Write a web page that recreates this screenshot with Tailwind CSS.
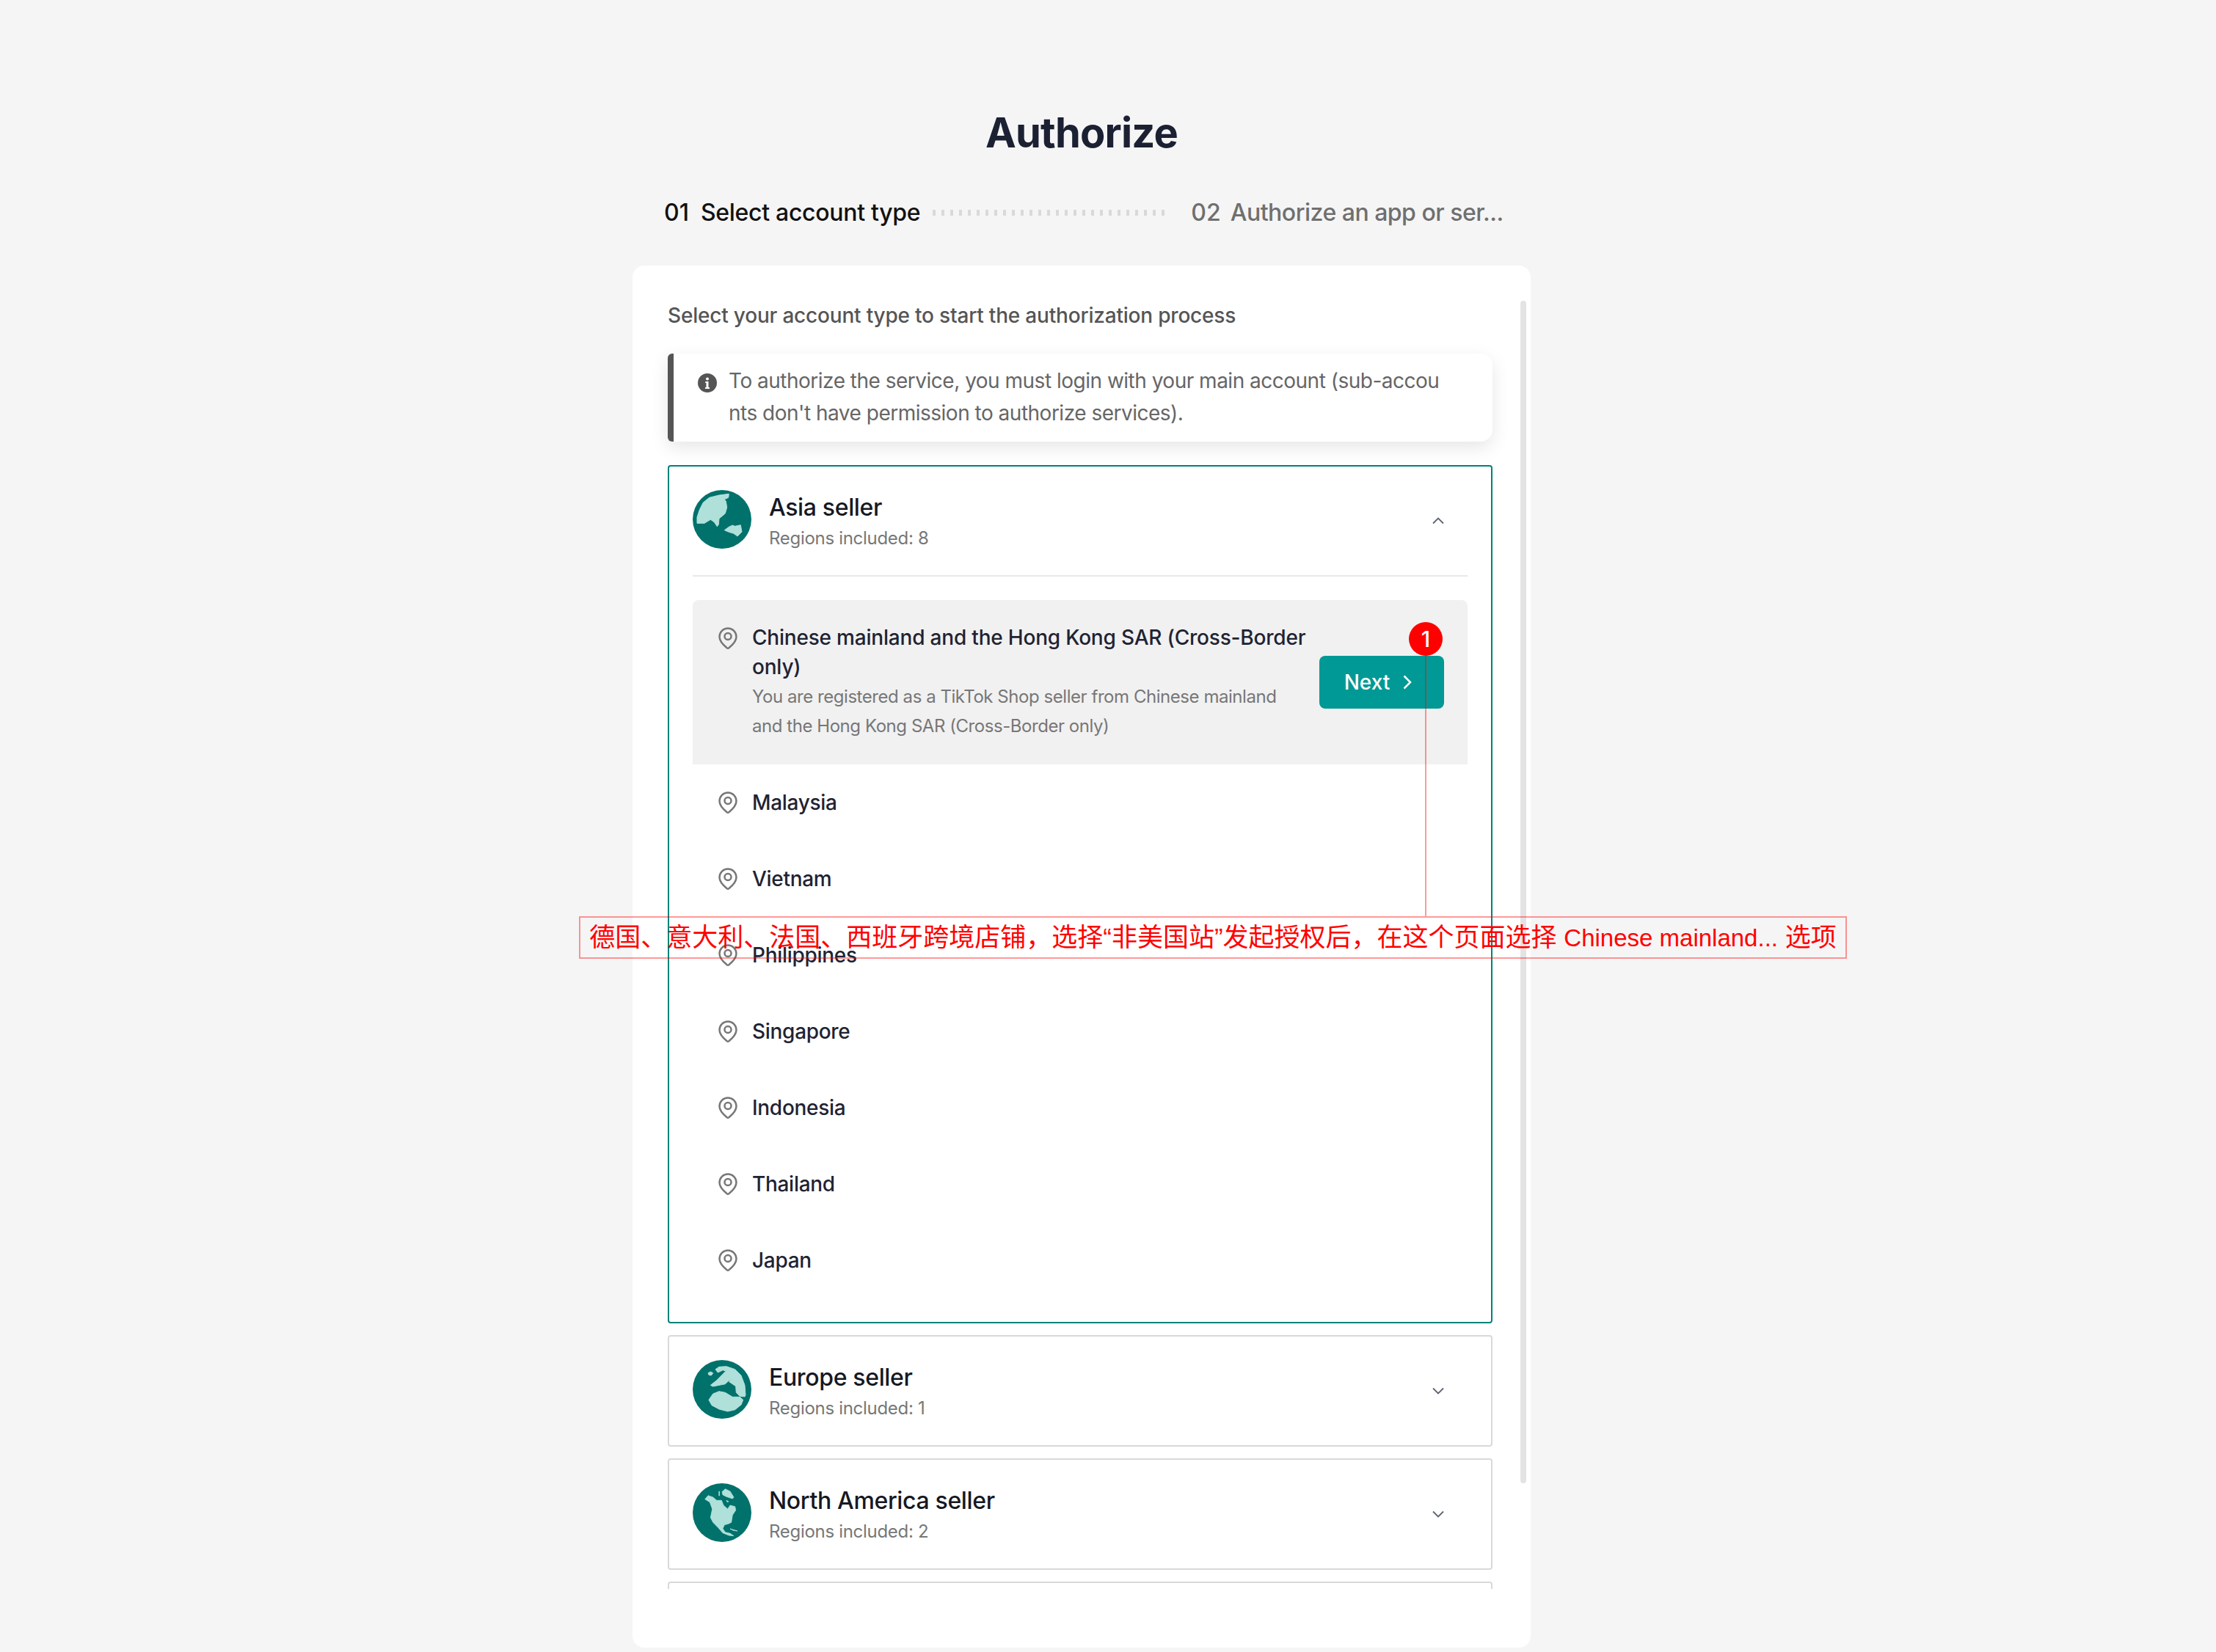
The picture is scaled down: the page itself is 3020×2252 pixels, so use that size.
<!DOCTYPE html>
<html lang="zh-CN">
<head>
<meta charset="utf-8">
<script src="https://cdn.jsdelivr.net/npm/@tailwindcss/browser@4"></script>
<title>Authorize</title>
</head>
<body class="relative w-[3020px] h-[2252px] overflow-hidden bg-[#f5f5f5] font-['Inter','Noto_Sans_CJK_SC',sans-serif]">
<svg class="hidden">
  <symbol id="pin" viewBox="0 0 26 30"><path d="M13 1.500C6.600 1.500 1.500 6.600 1.500 13c0 6 5.600 11.500 10.200 15.200.8.6 1.800.6 2.600 0C18.900 24.500 24.500 19 24.500 13 24.500 6.600 19.400 1.500 13 1.500Z" fill="none" stroke="#777" stroke-width="2.500"/><circle cx="13" cy="12.500" r="4.500" fill="none" stroke="#777" stroke-width="2.500"/></symbol>
</svg>

<main class="ml-[862px] w-[1224px] pt-[149px]">
  <h1 class="text-center text-[56px] leading-[64px] font-bold tracking-[-0.8px] text-[#1b2033]">Authorize</h1>
  <div class="mt-[57px] flex h-[40px] items-center pl-[43px] text-[32px] leading-[40px] font-medium">
    <span class="text-[#111]">01</span>
    <span class="ml-[16px] tracking-[-0.3px] text-[#111]">Select account type</span>
    <div class="ml-[17px] h-[8px] w-[318px] bg-[repeating-linear-gradient(90deg,#d9d9d9_0,#d9d9d9_4px,transparent_4px,transparent_12px)]"></div>
    <span class="ml-[34px] text-[#6f6f6f]">02</span>
    <span class="ml-[13px] whitespace-nowrap tracking-[-0.5px] text-[#6f6f6f]">Authorize an app or ser...</span>
  </div>

  <section class="relative mt-[52px] h-[1884px] rounded-[16px] bg-white">
    <div class="absolute right-[6px] top-[48px] h-[1612px] w-[8px] rounded-full bg-[#e3e3e3]"></div>
    <div class="h-[1804px] overflow-hidden pl-[48px] pr-[52px] pt-[48px]">
      <p class="text-[28px] leading-[40px] font-medium tracking-[-0.2px] text-[#555]">Select your account type to start the authorization process</p>

      <div class="mt-[32px] flex h-[120px] gap-[16px] rounded-l-[6px] rounded-r-[16px] border-l-[8px] border-[#555] bg-white pl-[33px] pt-[15px] text-[28px] leading-[44px] tracking-[-0.5px] text-[#666] shadow-[0_8px_24px_rgba(0,0,0,0.10)]">
        <svg class="mt-[12px] h-[26px] w-[26px] shrink-0" viewBox="0 0 26 26"><circle cx="13" cy="13" r="13" fill="#555"/><circle cx="13" cy="7.500" r="2" fill="#fff"/><path d="M10.500 11h4v8h1.500v2h-6v-2h1.500v-6h-1.500z" fill="#fff"/></svg>
        <p>To authorize the service, you must login with your main account (sub-accou<br>nts don't have permission to authorize services).</p>
      </div>

      <div class="mt-[32px] h-[1170px] rounded-[4px] border-2 border-[#008279] px-[32px] pt-[32px]">
        <div class="flex h-[80px] items-start">
          <svg class="h-20 w-20 shrink-0" viewBox="0 0 80 80"><circle cx="40" cy="40" r="40" fill="#00716b"/><g fill="#b0e0da" stroke="#b0e0da" stroke-linejoin="round"><polygon points="49.300,5.300 36,7 22.700,10.300 14.300,17 9.300,27 6,37 6,45.300 16,45.300 24.300,40.300 29.300,43.700 33.300,49.700 35.300,47 36,39 44.300,32 46.700,23.700 45.300,15.300 43.300,12.700 48.700,10.300"/><polygon points="43.300,54.700 49.300,50.300 54.300,48 57.700,49.300 65.300,47.700 67,57 61,63 56,59.300 49.300,57.300"/></g></svg>
          <div class="ml-[24px] pt-[4px]">
            <div class="text-[32px] leading-[40px] font-medium tracking-[-0.35px] text-[#161823]">Asia seller</div>
            <div class="mt-[2px] text-[24px] leading-[40px] tracking-[-0.3px] text-[#777]">Regions included: 8</div>
          </div>
          <svg class="ml-auto mr-[32px] mt-[37px] h-[10px] w-[16px]" viewBox="0 0 16 10"><path d="M1 8.500 8 1.500l7 7" fill="none" stroke="#5b6270" stroke-width="1.800"/></svg>
        </div>
        <div class="mt-[36px] h-[2px] bg-[#e8e8ec]"></div>

        <div class="mt-[32px] flex h-[224px] rounded-t-[8px] bg-[#f1f1f1] pl-[32px] pr-[32px] pt-[31px]">
          <svg class="ml-[3px] mt-[6px] h-[30px] w-[26px] shrink-0"><use href="#pin"/></svg>
          <div class="ml-[20px] w-[753px] shrink-0 whitespace-nowrap">
            <div class="text-[28px] leading-[40px] font-medium tracking-[-0.2px] text-[#1f2333]">Chinese mainland and the Hong Kong SAR (Cross-Border<br>only)</div>
            <div class="pt-[1px] text-[24px] leading-[40px] tracking-[-0.45px] text-[#777]">You are registered as a TikTok Shop seller from Chinese mainland<br>and the Hong Kong SAR (Cross-Border only)</div>
          </div>
          <button class="ml-[20px] mt-[45px] flex h-[72px] w-[170px] shrink-0 items-center justify-center gap-[18px] rounded-[8px] bg-[#009995] pr-[10px] text-[28px] font-medium text-white">
            Next
            <svg class="h-[20px] w-[12px]" viewBox="0 0 12 20"><path d="M1.500 1.500 10 10l-8.500 8.500" fill="none" stroke="#fff" stroke-width="2.500"/></svg>
          </button>
        </div>

        <ul class="text-[28px] font-medium tracking-[-0.3px] text-[#1f2333]">
          <li class="flex h-[104px] items-center gap-[20px] pl-[35px]"><svg class="h-[30px] w-[26px]"><use href="#pin"/></svg>Malaysia</li>
          <li class="flex h-[104px] items-center gap-[20px] pl-[35px]"><svg class="h-[30px] w-[26px]"><use href="#pin"/></svg>Vietnam</li>
          <li class="flex h-[104px] items-center gap-[20px] pl-[35px]"><svg class="h-[30px] w-[26px]"><use href="#pin"/></svg>Philippines</li>
          <li class="flex h-[104px] items-center gap-[20px] pl-[35px]"><svg class="h-[30px] w-[26px]"><use href="#pin"/></svg>Singapore</li>
          <li class="flex h-[104px] items-center gap-[20px] pl-[35px]"><svg class="h-[30px] w-[26px]"><use href="#pin"/></svg>Indonesia</li>
          <li class="flex h-[104px] items-center gap-[20px] pl-[35px]"><svg class="h-[30px] w-[26px]"><use href="#pin"/></svg>Thailand</li>
          <li class="flex h-[104px] items-center gap-[20px] pl-[35px]"><svg class="h-[30px] w-[26px]"><use href="#pin"/></svg>Japan</li>
        </ul>
      </div>

      <div class="mt-[16px] flex h-[152px] items-start rounded-[4px] border-2 border-[#d9d9d9] px-[32px] pt-[32px]">
        <svg class="h-20 w-20 shrink-0" viewBox="0 0 80 80"><circle cx="40" cy="40" r="40" fill="#00716b"/><g fill="#b0e0da" stroke="#b0e0da" stroke-linejoin="round"><polygon points="21,17.700 24.300,16 27.700,17.700 25.300,21 22,20.300"/><polygon points="31,12.700 36,9.300 46,8.700 57.700,12.700 66,21 71,34.300 72,47.700 71,50 64.300,49.300 59.300,44.300 58.700,35.700 54.300,32.700 49.300,29.300 57.700,24.300 64.300,27 57.700,25 49.300,28 44.300,32.700 36,34.300 27.700,36 24.300,34.300 32.700,27.700 41,19.300 45.300,15 41,13.700 34.300,17"/><polygon points="22,54.300 27.700,46 36,42.700 44.300,44.300 54.300,50.300 64.300,50.300 68.700,54.300 66,61 57.700,67.700 47.700,70 36,67 26,61.700"/></g></svg>
        <div class="ml-[24px] pt-[4px]">
          <div class="text-[32px] leading-[40px] font-medium tracking-[-0.35px] text-[#161823]">Europe seller</div>
          <div class="mt-[2px] text-[24px] leading-[40px] tracking-[-0.3px] text-[#777]">Regions included: 1</div>
        </div>
        <svg class="ml-auto mr-[32px] mt-[37px] h-[10px] w-[16px]" viewBox="0 0 16 10"><path d="M1 1.500 8 8.500l7-7" fill="none" stroke="#5b6270" stroke-width="1.800"/></svg>
      </div>

      <div class="mt-[16px] flex h-[152px] items-start rounded-[4px] border-2 border-[#d9d9d9] px-[32px] pt-[32px]">
        <svg class="h-20 w-20 shrink-0" viewBox="0 0 80 80"><circle cx="40" cy="40" r="40" fill="#00716b"/><g fill="#b0e0da" stroke="#b0e0da" stroke-linejoin="round" stroke-width="0.800"><polygon points="40,11.700 44.300,7.700 51,11 56,19 54.300,21 46,18.300 41,15.700"/><rect x="35.800" y="11" width="0.700" height="6"/><polygon points="46,23.300 49,25 47,25.500"/><polygon points="16.700,21.700 21,16.700 27.700,19 32.700,23.300 39.300,23.300 42,30 47.700,35 51,30 57.700,31.700 58.700,36.700 54.300,43.300 52.700,53.300 49.300,55 43.300,56.700 41,61.700 44.300,66.700 51,68.300 56,71.700 49.300,71 41,67.700 34.300,60 27.700,53.300 24.300,46.700 26.700,35 23.300,25.700"/><polygon points="51,62 56,63.500 61,65 56,64.500"/></g></svg>
        <div class="ml-[24px] pt-[4px]">
          <div class="text-[32px] leading-[40px] font-medium tracking-[-0.35px] text-[#161823]">North America seller</div>
          <div class="mt-[2px] text-[24px] leading-[40px] tracking-[-0.3px] text-[#777]">Regions included: 2</div>
        </div>
        <svg class="ml-auto mr-[32px] mt-[37px] h-[10px] w-[16px]" viewBox="0 0 16 10"><path d="M1 1.500 8 8.500l7-7" fill="none" stroke="#5b6270" stroke-width="1.800"/></svg>
      </div>

      <div class="mt-[16px] h-[152px] rounded-[4px] border-2 border-[#d9d9d9]"></div>
    </div>
  </section>
</main>

<div class="absolute left-[1920px] top-[848px] flex h-[46px] w-[46px] items-center justify-center rounded-full bg-[#ff0000] text-[30px] font-medium text-white">1</div>
<div class="absolute left-[1942px] top-[894px] h-[355px] w-[2px] bg-[#ff0000]/40"></div>
<div class="absolute left-[789px] top-[1249px] flex h-[58px] w-[1728px] items-center justify-center whitespace-nowrap border-2 border-[#ff0000]/40 text-[35px] text-[#ff0000] font-['Liberation_Sans','Noto_Sans_CJK_SC',sans-serif]"><span>德国、意大利、法国、西班牙跨境店铺，选择“非美国站”发起授权后，在这个页面选择 <span class="text-[33px]">Chinese mainland...</span> 选项</span></div>
</body>
</html>
